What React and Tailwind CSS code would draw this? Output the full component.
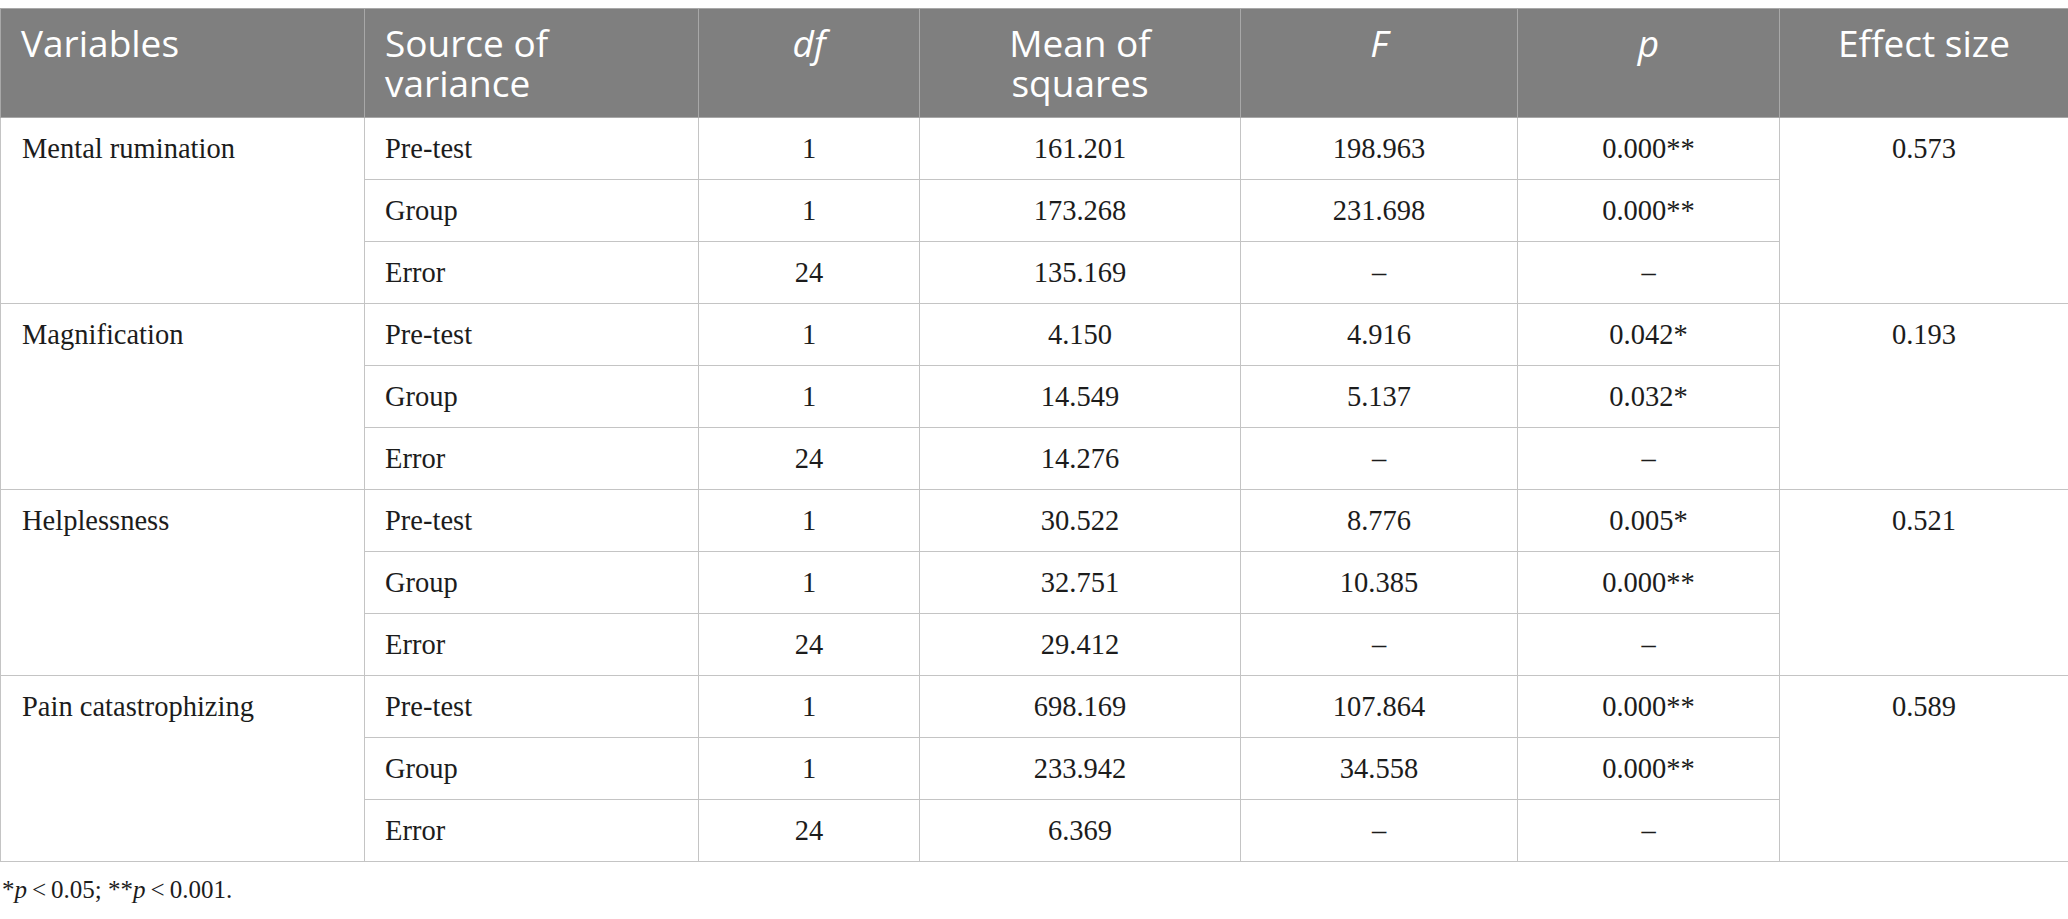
const groups = [
  {
    name: "Mental rumination",
    effect: "0.573",
    rows: [
      ["Pre-test", "1", "161.201", "198.963", "0.000**"],
      ["Group", "1", "173.268", "231.698", "0.000**"],
      ["Error", "24", "135.169", "–", "–"],
    ],
  },
  {
    name: "Magnification",
    effect: "0.193",
    rows: [
      ["Pre-test", "1", "4.150", "4.916", "0.042*"],
      ["Group", "1", "14.549", "5.137", "0.032*"],
      ["Error", "24", "14.276", "–", "–"],
    ],
  },
  {
    name: "Helplessness",
    effect: "0.521",
    rows: [
      ["Pre-test", "1", "30.522", "8.776", "0.005*"],
      ["Group", "1", "32.751", "10.385", "0.000**"],
      ["Error", "24", "29.412", "–", "–"],
    ],
  },
  {
    name: "Pain catastrophizing",
    effect: "0.589",
    rows: [
      ["Pre-test", "1", "698.169", "107.864", "0.000**"],
      ["Group", "1", "233.942", "34.558", "0.000**"],
      ["Error", "24", "6.369", "–", "–"],
    ],
  },
];

const th = "align-top border border-[#a8a8a8] px-[20px] pt-[14px] pb-[14px] text-[37px] leading-[40px] font-normal text-white";
const td = "h-[62px] align-top border border-[#c4c4c4] pt-[14px] pb-[13px] text-[28.5px] leading-[34px]";

export default function App() {
  return (
    <div className="w-[2068px] bg-white pt-[8px] text-[#1c1c1c] font-['Liberation_Serif',serif]">
      <table className="w-[2068px] table-fixed border-collapse">
        <colgroup>
          <col className="w-[364px]" />
          <col className="w-[334px]" />
          <col className="w-[221px]" />
          <col className="w-[321px]" />
          <col className="w-[277px]" />
          <col className="w-[262px]" />
          <col className="w-[289px]" />
        </colgroup>
        <thead className="bg-[#7f7f7f] font-['Open_Sans',sans-serif]">
          <tr>
            <th className={`${th} text-left`}>Variables</th>
            <th className={`${th} text-left`}>
              Source of
              <br />
              variance
            </th>
            <th className={`${th} text-center italic`}>df</th>
            <th className={`${th} text-center`}>
              Mean of
              <br />
              squares
            </th>
            <th className={`${th} text-center italic`}>F</th>
            <th className={`${th} text-center italic`}>p</th>
            <th className={`${th} text-center`}>Effect size</th>
          </tr>
        </thead>
        <tbody>
          {groups.map((g) =>
            g.rows.map((r, i) => (
              <tr key={g.name + r[0]}>
                {i === 0 ? (
                  <td rowSpan={3} className={`${td} px-[21px] text-left`}>
                    {g.name}
                  </td>
                ) : null}
                <td className={`${td} px-[20px] text-left`}>{r[0]}</td>
                <td className={`${td} text-center`}>{r[1]}</td>
                <td className={`${td} text-center`}>{r[2]}</td>
                <td className={`${td} text-center`}>{r[3]}</td>
                <td className={`${td} text-center`}>{r[4]}</td>
                {i === 0 ? (
                  <td rowSpan={3} className={`${td} text-center`}>
                    {g.effect}
                  </td>
                ) : null}
              </tr>
            ))
          )}
        </tbody>
      </table>
      <p className="mt-[11px] pl-[2px] text-[25px] leading-[34px]">
        *<i>p</i>{"\u2009<\u2009"}0.05; **<i>p</i>{"\u2009<\u2009"}0.001.
      </p>
    </div>
  );
}
